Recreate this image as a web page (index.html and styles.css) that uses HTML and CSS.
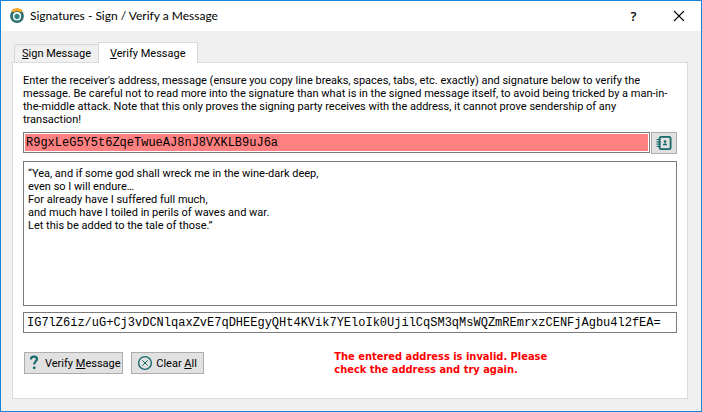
FILE: index.html
```
<!DOCTYPE html>
<html lang="en">

<head>
    <meta charset="utf-8">
    <title>Signatures - Sign / Verify a Message</title>
    <link rel="stylesheet" href="styles.css">
</head>

<body>
    <div class="window">
        <header class="titlebar">
            <svg class="logo" width="16" height="16" viewBox="0 0 16 16">
                <circle cx="8" cy="8" r="5.4" fill="none" stroke="#2b6f70" stroke-width="3"/>
                <path d="M3.4 3.6A6.2 6.2 0 0 1 12.6 3.6" fill="none" stroke="#f9a825" stroke-width="3"/>
                <circle cx="8" cy="8.4" r="4" fill="#fff"/>
                <path d="M8 5.4l2.6 1.5v3L8 11.4 5.4 9.9v-3z" fill="#2f8583"/>
            </svg>
            <h1>Signatures - Sign / Verify a Message</h1>
            <button type="button" class="caption help" aria-label="Help">?</button>
            <button type="button" class="caption" aria-label="Close">
                <svg width="12" height="12" viewBox="0 0 12 12">
                    <path d="M1 1l10 10M11 1L1 11" stroke="#000" stroke-width="1.1"/>
                </svg>
            </button>
        </header>

        <main class="content">
            <div class="tabs" role="tablist">
                <button type="button" class="tab" role="tab"><u>S</u>ign Message</button>
                <button type="button" class="tab active" role="tab" aria-selected="true"><u>V</u>erify Message</button>
            </div>

            <form class="panel">
                <p class="info">Enter the receiver's address, message (ensure you copy line breaks, spaces, tabs, etc. exactly) and signature below to verify the message. Be careful not to read more into the signature than what is in the signed message itself, to avoid being tricked by a man-in-the-middle attack. Note that this only proves the signing party receives with the address, it cannot prove sendership of any transaction!</p>

                <div class="address-row">
                    <input type="text" class="field mono invalid" aria-label="Address" spellcheck="false" value="R9gxLeG5Y5t6ZqeTwueAJ8nJ8VXKLB9uJ6a">
                    <button type="button" class="btn btn-book" aria-label="Address book">
                        <svg width="16" height="16" viewBox="0 0 16 16" fill="none" stroke="#17696a">
                            <rect x="3.6" y="1.8" width="11" height="12.4" rx="1.6" stroke-width="1.8"/>
                            <path d="M.5 4.5h4M.5 6.8h4M.5 9.2h4M.5 11.5h4" stroke-width="1.2"/>
                            <circle cx="9" cy="6.6" r="1.3" fill="#17696a" stroke="none"/>
                            <path d="M7 10.2V9.6a1.4 1.4 0 0 1 1.4-1.2h1.2A1.4 1.4 0 0 1 11 9.6v.6z" fill="#17696a" stroke="none"/>
                        </svg>
                    </button>
                </div>

                <textarea class="field message" aria-label="Message" spellcheck="false">“Yea, and if some god shall wreck me in the wine-dark deep,
even so I will endure…
For already have I suffered full much,
and much have I toiled in perils of waves and war.
Let this be added to the tale of those.”</textarea>

                <input type="text" class="field mono" aria-label="Signature" spellcheck="false" value="IG7lZ6iz/uG+Cj3vDCNlqaxZvE7qDHEEgyQHt4KVik7YEloIk0UjilCqSM3qMsWQZmREmrxzCENFjAgbu4l2fEA=">

                <div class="actions">
                    <button type="button" class="btn">
                        <svg width="16" height="16" viewBox="0 0 16 16" fill="none" stroke="#17696a">
                            <path d="M5 4.6V4C5 2.3 6.2 1.6 8 1.6s3 .9 3 2.5C11 6.3 8.2 6.4 8.2 9.4" stroke-width="2.2"/>
                            <circle cx="8.2" cy="12.8" r="1.4" fill="#17696a" stroke="none"/>
                        </svg>
                        <span>Verify <u>M</u>essage</span>
                    </button>
                    <button type="button" class="btn">
                        <svg width="16" height="16" viewBox="0 0 16 16" fill="none" stroke="#17696a">
                            <circle cx="8" cy="8" r="6.4" stroke-width="1.4"/>
                            <path d="M5.4 5.4l5.2 5.2M10.6 5.4l-5.2 5.2" stroke-width="1"/>
                        </svg>
                        <span>Clear <u>A</u>ll</span>
                    </button>
                    <p class="status" role="status">The entered address is invalid. Please check the address and try again.</p>
                </div>
            </form>
        </main>
    </div>
</body>

</html>
```
FILE: styles.css
```
* {
    margin: 0;
    padding: 0;
    box-sizing: border-box;
}

body {
    font: 11px/13px Tahoma, Roboto, sans-serif;
    color: #000;
}

button,
input,
textarea {
    font: inherit;
    color: inherit;
}

.window {
    display: flex;
    flex-direction: column;
    min-height: 100vh;
    border: 1px solid #1883d7;
    background: #f0f0f0;
}

/* title bar */
.titlebar {
    display: flex;
    align-items: center;
    height: 30px;
    padding-left: 8px;
    background: #fff;
}

.titlebar h1 {
    flex: 1;
    margin-left: 5px;
    font: 12px/16px "Segoe UI", Lato, sans-serif;
}

.caption {
    display: flex;
    align-items: center;
    justify-content: center;
    width: 45px;
    height: 30px;
    border: none;
    background: none;
}

.help {
    font: 600 13px/16px "Segoe UI", "Open Sans", sans-serif;
}

.content {
    flex: 1;
    display: flex;
    flex-direction: column;
    padding: 11px 13px 12px 11px;
}

/* tabs */
.tabs {
    display: flex;
    align-items: flex-end;
    padding-left: 2px;
}

.tab {
    height: 18px;
    padding: 0 7px;
    border: 1px solid #d9d9d9;
    border-width: 1px 0 0 1px;
    background: #f0f0f0;
}

.tab.active {
    position: relative;
    height: 21px;
    margin-bottom: -1px;
    padding: 0 11px;
    border-right-width: 1px;
    background: #fff;
}

.panel {
    flex: 1;
    display: flex;
    flex-direction: column;
    padding: 11px 10px 22px;
    border: 1px solid #dcdcdc;
    background: #fff;
}

.info {
    margin-bottom: 6px;
    padding-right: 4px;
}

.field {
    border: 1px solid #7a7a7a;
    background: #fff;
    outline: none;
}

input.field {
    height: 21px;
    padding: 0 3px;
}

.mono {
    font: 12px/15px "Courier New", "Liberation Mono", monospace;
}

.address-row {
    display: flex;
    gap: 1px;
    margin-bottom: 7px;
}

.address-row .field {
    flex: 1;
    min-width: 0;
    padding: 0 2px;
}

.invalid {
    background: #ff8080;
    box-shadow: inset 0 0 0 1px #fff;
}

.message {
    flex: 1;
    margin-bottom: 6px;
    padding: 5px 4px;
    resize: none;
}

/* buttons */
.btn {
    display: flex;
    align-items: center;
    justify-content: center;
    gap: 3px;
    min-width: 73px;
    height: 22px;
    padding: 0 1px;
    border: 1px solid #adadad;
    background: #e1e1e1;
    white-space: nowrap;
}

.btn-book {
    min-width: 26px;
}

.actions {
    display: flex;
    align-items: center;
    gap: 8px;
    margin-top: 17px;
    padding-left: 1px;
}

.status {
    max-width: 220px;
    margin: 0 auto;
    font-family: Tahoma, "DejaVu Sans Condensed", sans-serif;
    font-weight: bold;
    color: #f00;
}
```
